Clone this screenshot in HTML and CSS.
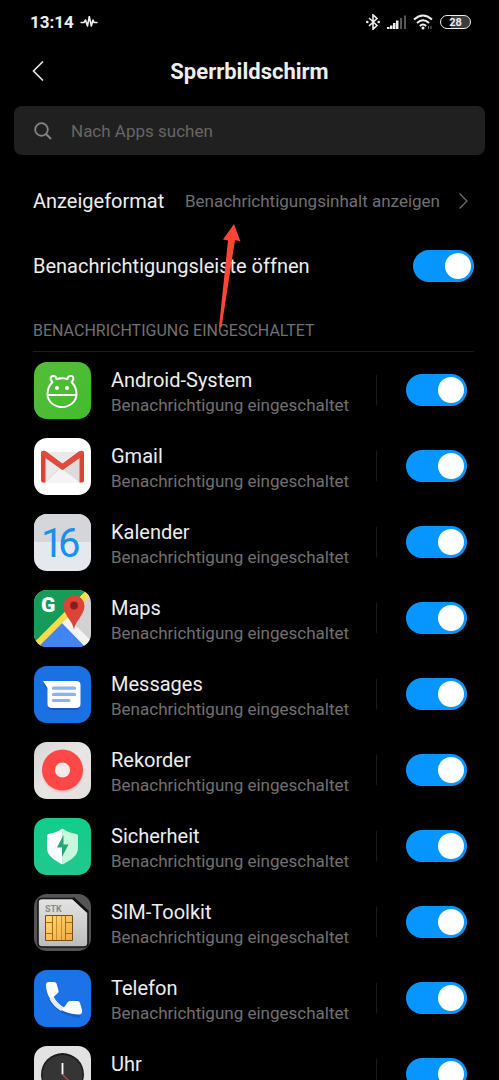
FILE: index.html
```
<!DOCTYPE html>
<html lang="de">
<head>
  <meta charset="UTF-8">
  <meta name="viewport" content="width=device-width, initial-scale=1.0">
  <title>Sperrbildschirm</title>
  <link rel="stylesheet" href="styles.css">
</head>
<body>

  <div class="screen">
    <div class="statusbar">
      <span class="time">13:14</span>
      <svg class="pulse" width="18" height="12" viewBox="0 0 18 12"><path d="M0.500 6.500H4l1.500-2.500 2 6 1.800-9.500 2 9.500 1.700-6 1 2.500H17.500" fill="none" stroke="#eee" stroke-width="1.600" stroke-linejoin="round"/></svg>
      <div class="status-icons">
        <svg width="14" height="16" viewBox="0 0 14 16"><path d="M3 4l8 7.500L7 15.200V0.800L11 4.500 3 12" fill="none" stroke="#eee" stroke-width="1.600"/><circle cx="1.300" cy="8" r="1.300" fill="#eee"/><circle cx="12.700" cy="8" r="1.300" fill="#eee"/></svg>
        <svg width="19" height="14" viewBox="0 0 19 14"><path d="M0 12h2.500v2H0zM3 10.500h2.500V14H3zM6 8h2.500v6H6zM9 5.500h2.500V14H9z" fill="#eee"/><path d="M13 3h2v11h-2zM17 0.500h2V14h-2z" fill="#555"/></svg>
        <svg width="20" height="16" viewBox="0 0 20 16"><g fill="none" stroke="#eee" stroke-width="2"><path d="M1 5.500q9-8 18 0"/><path d="M4 9q6-5.500 12 0"/><path d="M6.800 12q3.200-3 6.400 0"/></g><circle cx="10" cy="14" r="1.500" fill="#eee"/><path d="M15.500 12v3M18 12v3" stroke="#777"/></svg>
        <span class="battery">28</span>
      </div>
    </div>

    <header class="header">
      <button class="back" aria-label="Zurück">
        <svg width="12" height="20" viewBox="0 0 12 20"><path d="M11 0.500L1.500 10 11 19.500" fill="none" stroke="#e8e8e8" stroke-width="1.600"/></svg>
      </button>
      <h1>Sperrbildschirm</h1>
    </header>

    <label class="search">
      <svg width="18" height="18" viewBox="0 0 18 18"><circle cx="7.500" cy="7.500" r="6.300" fill="none" stroke="#858585" stroke-width="1.800"/><path d="M12 12l5 5" stroke="#858585" stroke-width="2"/></svg>
      <input type="search" placeholder="Nach Apps suchen" aria-label="Nach Apps suchen">
    </label>

    <div class="settings">
      <a class="setting" href="#format">
        <span class="name">Anzeigeformat</span>
        <span class="value">Benachrichtigungsinhalt anzeigen</span>
        <svg width="9" height="16" viewBox="0 0 9 16"><path d="M0.500 0.500L8 8 0.500 15.500" fill="none" stroke="#707070" stroke-width="1.200"/></svg>
        <svg class="arrow" width="22" height="104" viewBox="0 0 22 104"><path d="M0 103L9 16.500 4 15.500 15 0 21.500 17.500 16 16 2.500 103.500z" fill="#fb4634"/></svg>
      </a>
      <label class="setting">
        <span class="name">Benachrichtigungsleiste öffnen</span>
        <input class="switch" type="checkbox" checked>
      </label>
    </div>

    <h2>BENACHRICHTIGUNG EINGESCHALTET</h2>

    <ul class="apps">
      <li>
        <label class="app">
          <svg class="icon" viewBox="0 0 57 57">
            <defs><linearGradient id="green" x1="0" y1="0" x2="1" y2="1"><stop offset="0" stop-color="#55bd3c"/><stop offset="1" stop-color="#43bc2d"/></linearGradient></defs>
            <rect width="57" height="57" fill="url(#green)"/>
            <path d="M18.500 20c-3.500-3-1.500-6.500 1-6 1.800 0 2.800 1.500 3 3q5.500-1.400 11 0c.2-1.500 1.200-3 3-3 2.500-.5 4.500 3 1 6q5 5 5 12c0 7-6 13-14.500 13s-14.500-6-14.500-13q0-7 5-12zM14 33h28" fill="none" stroke="#fff" stroke-width="2" stroke-linejoin="round"/>
            <circle cx="23" cy="26" r="2" fill="#fff"/><circle cx="33" cy="26" r="2" fill="#fff"/>
          </svg>
          <span class="text"><span class="name">Android-System</span><span class="sub">Benachrichtigung eingeschaltet</span></span>
          <input class="switch" type="checkbox" checked>
        </label>
      </li>
      <li>
        <label class="app">
          <svg class="icon" viewBox="0 0 57 57">
            <rect width="57" height="57" fill="#fff"/>
            <path d="M8 14h41v30.500H8z" fill="#e9e9ea"/>
            <path d="M11 44.500L28.500 29 46 44.500z" fill="#f5f5f5"/>
            <path d="M11 44.500L24 32M46 44.500L33 32" stroke="#d6d6d6" stroke-width=".7"/>
            <path d="M28.500 31.500L46 19v25.500z" fill="#dcdcdc"/>
            <path d="M7 15.500c0-3 3-3.500 5-2L28.500 25.800 45 13.500c2-1.500 5-1 5 2v27q0 2-2 2h-2.500V19.500L28.500 32 11.500 19.500v25H9q-2 0-2-2z" fill="#da4437"/>
            <path d="M7 15.500c0-3 3-3.500 5-2L28.500 25.800 45 13.500c2-1.500 5-1 5 2q0 1.500-1.500 2.500l-20 14L8.500 18Q7 17 7 15.500z" fill="#e04a3f"/>
          </svg>
          <span class="text"><span class="name">Gmail</span><span class="sub">Benachrichtigung eingeschaltet</span></span>
          <input class="switch" type="checkbox" checked>
        </label>
      </li>
      <li>
        <label class="app">
          <svg class="icon" viewBox="0 0 57 57">
            <rect width="57" height="57" fill="#e5e8ec"/>
            <rect width="57" height="28" fill="#d4d6da"/>
            <text class="day" x="7 24" y="43">16</text>
          </svg>
          <span class="text"><span class="name">Kalender</span><span class="sub">Benachrichtigung eingeschaltet</span></span>
          <input class="switch" type="checkbox" checked>
        </label>
      </li>
      <li>
        <label class="app">
          <svg class="icon" viewBox="0 0 57 57">
            <rect width="57" height="57" fill="#d2d2d2"/>
            <path d="M0 0h53L0 53z" fill="#169b58"/>
            <path d="M28 28L57 57H0z" fill="#4284f4"/>
            <path d="M30 27L58 55M27 30L56 59" stroke="#f4f4f4" stroke-width="4.500"/>
            <path d="M26 31L54 60H-3z" fill="#4284f4"/>
            <path d="M0 57L57 0" stroke="#fddc45" stroke-width="6"/>
            <path d="M40 40c-1-9-10-14-10.500-24a10.500 10.500 0 0 1 21 0C50 26 41 31 40 40z" fill="#dc4437"/>
            <circle cx="40" cy="15.500" r="3.900" fill="#841f1d"/>
            <text class="g" x="7" y="22">G</text>
          </svg>
          <span class="text"><span class="name">Maps</span><span class="sub">Benachrichtigung eingeschaltet</span></span>
          <input class="switch" type="checkbox" checked>
        </label>
      </li>
      <li>
        <label class="app">
          <svg class="icon" viewBox="0 0 57 57">
            <rect width="57" height="57" fill="#1b70e2"/>
            <path d="M9 18l5 6v16q0 4 4 4h24q4 0 4-4V22z" fill="#155bc0"/>
            <path d="M9 15h33q4.500 0 4.500 4v19q0 4-4.500 4H18q-4.500 0-4.500-4V22z" fill="#fff"/>
            <path d="M19.500 22.200h21M19.500 28.400h21M19.500 34.500h15.500" stroke="#8cb2f0" stroke-width="3.200" stroke-linecap="round"/>
          </svg>
          <span class="text"><span class="name">Messages</span><span class="sub">Benachrichtigung eingeschaltet</span></span>
          <input class="switch" type="checkbox" checked>
        </label>
      </li>
      <li>
        <label class="app">
          <svg class="icon" viewBox="0 0 57 57">
            <defs><linearGradient id="silver" x1="0" y1="0" x2="1" y2="1"><stop offset="0" stop-color="#d9d7d6"/><stop offset=".5" stop-color="#e8e6e5"/><stop offset="1" stop-color="#e2dfde"/></linearGradient></defs>
            <rect width="57" height="57" fill="url(#silver)"/>
            <circle cx="28.500" cy="30" r="21" fill="#f5b9b5" opacity=".5"/>
            <circle cx="28.500" cy="28" r="20.500" fill="#fe4848"/>
            <circle cx="28.500" cy="28" r="7.600" fill="#f7e9e8"/>
          </svg>
          <span class="text"><span class="name">Rekorder</span><span class="sub">Benachrichtigung eingeschaltet</span></span>
          <input class="switch" type="checkbox" checked>
        </label>
      </li>
      <li>
        <label class="app">
          <svg class="icon" viewBox="0 0 57 57">
            <defs><linearGradient id="mint" x1="0" y1="0" x2="0" y2="1"><stop offset="0" stop-color="#12cd8b"/><stop offset="1" stop-color="#21c88f"/></linearGradient></defs>
            <rect width="57" height="57" fill="url(#mint)"/>
            <path d="M28.500 10.500Q35 15 42.500 16q1.500.3 1.500 2v12c0 8-8 12.500-15.500 16.500z" fill="#c5f8dc"/>
            <path d="M28.500 10.500Q22 15 14.500 16q-1.500.3-1.500 2v12c0 8 8 12.500 15.500 16.500z" fill="#fff"/>
            <path d="M29.500 17L23 29.500h5V39l6.500-12.500h-5z" fill="#27a575"/>
          </svg>
          <span class="text"><span class="name">Sicherheit</span><span class="sub">Benachrichtigung eingeschaltet</span></span>
          <input class="switch" type="checkbox" checked>
        </label>
      </li>
      <li>
        <label class="app">
          <svg class="icon" viewBox="0 0 57 57">
            <defs>
              <linearGradient id="card" x1="0" y1="0" x2="0" y2="1"><stop offset="0" stop-color="#e4e4e4"/><stop offset="1" stop-color="#bcbcbc"/></linearGradient>
              <linearGradient id="gold" x1="0" y1="0" x2="1" y2="1"><stop offset="0" stop-color="#ffdc72"/><stop offset="1" stop-color="#f0a93c"/></linearGradient>
            </defs>
            <rect width="57" height="57" fill="#555"/>
            <path d="M8 4.500h31L54 18v31q0 4-4 4H8q-4 0-4-4V8.500q0-4 4-4z" fill="url(#card)" stroke="#151515" stroke-width="1.600"/>
            <path d="M39 4L54 18" stroke="#111" stroke-width="2.500"/>
            <text class="stk" x="11" y="18">STK</text>
            <path d="M11.500 21.500h27v25h-27z" fill="url(#gold)" stroke="#7b4b16"/>
            <path d="M18.500 21.500v25M31.500 21.500v25M11.500 28.500h7M11.500 39.500h7M31.500 28.500h7M31.500 39.500h7" fill="none" stroke="#a06b21"/>
            <path d="M22.500 22v24M27.500 22v24" stroke="#c98b2c"/>
          </svg>
          <span class="text"><span class="name">SIM-Toolkit</span><span class="sub">Benachrichtigung eingeschaltet</span></span>
          <input class="switch" type="checkbox" checked>
        </label>
      </li>
      <li>
        <label class="app">
          <svg class="icon" viewBox="0 0 57 57">
            <rect width="57" height="57" fill="#1c73e8"/>
            <path d="M15 28Q24 44 46 46.500" fill="none" stroke="#1660cb" stroke-width="3"/>
            <path d="M14 12h6q2 0 2.500 1.500l2 7q.4 1.500-.7 2.500l-4.300 4q4 7 10.500 10.500l3.500-5q1-1.500 2.500-1.500h7.500q2 0 2.500 2l2 7q.5 4.500-3 4.500C26 44.500 12 30 12 14.500q0-2.500 2-2.500z" fill="#fff"/>
            <path d="M19.500 27q4 7 10.500 10.500L27 41Q19 36 15.500 29z" fill="#e4ebf5"/>
          </svg>
          <span class="text"><span class="name">Telefon</span><span class="sub">Benachrichtigung eingeschaltet</span></span>
          <input class="switch" type="checkbox" checked>
        </label>
      </li>
      <li>
        <label class="app">
          <svg class="icon" viewBox="0 0 57 57">
            <rect width="57" height="57" fill="#e3e2e2"/>
            <circle cx="28.500" cy="28.500" r="21.500" fill="#1d1d1d"/>
            <circle cx="28.500" cy="29" r="20" fill="#353535"/>
            <path d="M28.500 17v11.500" stroke="#fff" stroke-width="1.800"/>
            <path d="M28.500 28.500L42 42" stroke="#d8404f" stroke-width="1.200"/>
          </svg>
          <span class="text"><span class="name">Uhr</span></span>
          <input class="switch" type="checkbox" checked>
        </label>
      </li>
    </ul>
  </div>

</body>
</html>
```
FILE: styles.css
```
* {
  margin: 0;
  padding: 0;
  box-sizing: border-box;
}

body {
  font-family: Roboto, sans-serif;
  background: #000;
  color: #eee;
}

.screen {
  height: 100vh;
  overflow: hidden;
}

.statusbar {
  display: flex;
  align-items: center;
  height: 44px;
  padding: 0 28px 0 30px;
}

.time {
  font-size: 17px;
  font-weight: 700;
}

.pulse {
  margin-left: 6px;
}

.status-icons {
  display: flex;
  align-items: center;
  gap: 7px;
  margin-left: auto;
}

.battery {
  width: 31px;
  height: 14px;
  border: 1px solid #eee;
  border-radius: 7px;
  background: linear-gradient(90deg, #000 33%, #3c3c3c 33%);
  font-size: 11px;
  font-weight: 700;
  line-height: 13px;
  text-align: center;
}

.header {
  display: grid;
  grid-template-columns: 48px 1fr 48px;
  align-items: center;
  height: 54px;
  padding: 0 14px;
}

.back {
  display: flex;
  justify-content: center;
  border: none;
  background: none;
  cursor: pointer;
}

h1 {
  font-size: 22px;
  font-weight: 700;
  text-align: center;
}

.search {
  display: flex;
  align-items: center;
  gap: 19px;
  height: 49px;
  margin: 8px 14px 0;
  padding: 0 20px;
  border-radius: 8px;
  background: #202020;
}

.search input {
  flex: 1;
  border: none;
  outline: none;
  background: none;
  color: #eee;
  font-family: inherit;
  font-size: 17px;
}

.search input::placeholder {
  color: #666;
}

.settings {
  padding: 13px 25px 0 33px;
}

.setting {
  position: relative;
  display: flex;
  align-items: center;
  height: 65px;
  color: inherit;
  text-decoration: none;
}

.name {
  font-size: 20px;
  line-height: 24px;
}

.value {
  margin-left: auto;
  margin-right: 19px;
  color: #707070;
  font-size: 17px;
}

a.setting {
  padding-right: 6px;
}

/* red pointer over the two rows */
.arrow {
  position: absolute;
  top: 56px;
  left: 186px;
  z-index: 1;
}

.switch {
  flex: none;
  appearance: none;
  width: 61px;
  height: 32px;
  margin-left: auto;
  padding: 3px;
  border-radius: 16px;
  background: #333;
  cursor: pointer;
}

.switch::before {
  content: "";
  display: block;
  width: 26px;
  height: 26px;
  border-radius: 50%;
  background: #fff;
}

.switch:checked {
  background: #0796ff;
}

.switch:checked::before {
  margin-left: auto;
}

h2 {
  height: 54px;
  margin: 0 25px 0 33px;
  border-bottom: 1px solid #1c1c1c;
  color: #707070;
  font-size: 16px;
  font-weight: 400;
  line-height: 66px;
}

.apps {
  list-style: none;
}

.app {
  display: flex;
  align-items: center;
  height: 76px;
  padding: 0 32px 0 34px;
}

.icon {
  flex: none;
  width: 57px;
  height: 57px;
  border-radius: 13px;
}

.text {
  display: flex;
  flex: 1;
  flex-direction: column;
  gap: 2px;
  height: 52px;
  margin-left: 20px;
  padding-top: 4px;
}

.sub {
  color: #707070;
  font-size: 17px;
  line-height: 22px;
}

/* thin line between the text and the switch */
.app::after {
  content: "";
  order: 1;
  width: 1px;
  height: 30px;
  background: #1c1c1c;
}

.app .switch {
  order: 2;
  margin-left: 29px;
}

.day {
  fill: #1a8ff0;
  font-size: 40px;
  font-weight: 400;
}

.g {
  fill: #fff;
  font-size: 21px;
  font-weight: 900;
}

.stk {
  fill: #8a8a8a;
  font-size: 9px;
  font-weight: 700;
}
```
